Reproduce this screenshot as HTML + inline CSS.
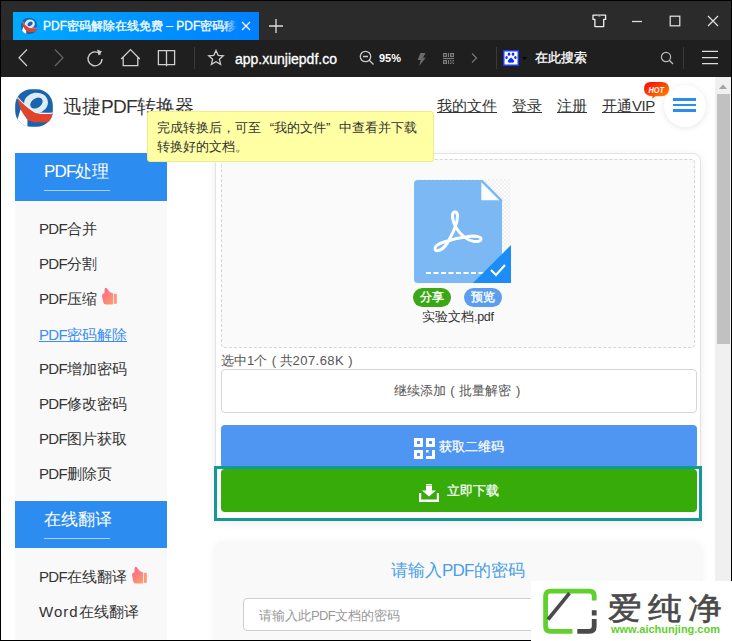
<!DOCTYPE html>
<html><head><meta charset="utf-8">
<style>
*{box-sizing:border-box;margin:0;padding:0}
html,body{width:732px;height:641px;overflow:hidden;background:#fff;font-family:"Liberation Sans",sans-serif}
.a{position:absolute}
#chrome{position:absolute;left:0;top:0;width:732px;height:77px;background:#1f1f1f}
#titlebar{position:absolute;left:0;top:0;width:732px;height:40px;background:#2b2b2b}
#tab{position:absolute;left:13px;top:12px;width:246px;height:28px;background:linear-gradient(90deg,#00aaff,#0094ff 50%,#007fff);overflow:hidden}
#tab .t{position:absolute;left:30px;top:6px;width:196px;overflow:hidden;font-size:12px;color:#fff;white-space:nowrap;line-height:16px;-webkit-text-stroke:0.3px #fff}
#tab .fade{position:absolute;left:212px;top:0;width:14px;height:28px;background:linear-gradient(90deg,rgba(0,132,255,0),#0084ff 90%)}
#page{position:absolute;left:1px;top:77px;width:714px;height:564px;background:#fff;overflow:hidden}
#scroll{position:absolute;left:715px;top:77px;width:16px;height:564px;background:#f0f0f0}
#rborder{position:absolute;left:731px;top:0;width:1px;height:641px;background:#000}
#lborder{position:absolute;left:0;top:0;width:1px;height:641px;background:#000}
#tborder{position:absolute;left:0;top:0;width:732px;height:1px;background:#000}
#bborder{position:absolute;left:0;top:640px;width:732px;height:1px;background:#000}
.link{text-decoration:underline;color:#333;font-size:15px;position:absolute;top:95px;line-height:20px;white-space:nowrap}
.side{position:absolute;left:14px;width:152px;background:#f9f9f9}
.shead{position:absolute;left:14px;width:152px;height:48px;background:#2d8cf0}
.shead>span{position:absolute;left:29px;top:7px;font-size:17px;color:#fff;line-height:24px;white-space:nowrap}
.shead i{position:absolute;left:29px;top:37px;width:66px;height:1px;background:rgba(255,255,255,.6)}
.lp{letter-spacing:-0.85px}
.lq{letter-spacing:-0.7px}
.item{position:absolute;left:38px;font-size:15px;color:#333;line-height:20px;white-space:nowrap}
.thumb{position:absolute}
.card{position:absolute;background:#fff;border:1px solid #e3e3e3;border-radius:8px;box-shadow:0 2px 8px rgba(0,0,0,.08)}
.btn{position:absolute;left:220px;width:476px;border-radius:4px;text-align:center;white-space:nowrap}
</style></head><body>
<div id="chrome">
  <div id="titlebar"></div>
  <div id="tab">
    <svg class="a" style="left:8px;top:6px" width="16" height="16" viewBox="0 0 40 40">
      <defs><clipPath id="lc2"><rect x="0.2" y="0.2" width="39.6" height="39.6" rx="17"/></clipPath></defs>
      <g clip-path="url(#lc2)">
      <rect x="0" y="0" width="40" height="40" fill="#1a64ad"/>
    <ellipse cx="22.1" cy="14.7" rx="12.6" ry="10.8" transform="rotate(-8 22.1 14.7)" fill="#dcedf9"/>
    <ellipse cx="22.6" cy="14.8" rx="7.2" ry="5.0" transform="rotate(-35 22.6 14.8)" fill="#1a64ad"/>
    <path d="M5.9 21.3L13.1 32.1V41H-1V36L2.6 32.1Z" fill="#fff"/>
    <path d="M2.2 8.6Q10 18 21.7 24.6Q28 26.5 41 25.4" fill="none" stroke="#eef7ff" stroke-width="1.6"/>
    <path d="M2.5 9.2Q10 18.5 21.7 25.4Q28 27 41 26L41 34Q30 35.5 20 34.9Q15.5 34 13.1 32.1Q8.5 26.5 5.9 21.3Q3.5 15.5 2.5 9.2Z" fill="#e2432b"/>
      </g>
    </svg>
    <div class="t">PDF密码解除在线免费 – PDF密码移除</div>
    <div class="fade"></div>
    <svg class="a" style="left:228px;top:9px" width="10" height="10" viewBox="0 0 10 10"><path d="M1 1L9 9M9 1L1 9" stroke="#fff" stroke-width="1.2"/></svg>
  </div>
  <svg class="a" style="left:269px;top:19px" width="14" height="14" viewBox="0 0 14 14"><path d="M7 0V14M0 7H14" stroke="#ddd" stroke-width="1.3"/></svg>
  <!-- window controls -->
  <svg class="a" style="left:592px;top:14px" width="15" height="14" viewBox="0 0 15 14"><path d="M1 1.2H13.6V5.4H11.7V12.6H2.9V5.4H1Z" fill="none" stroke="#f0f0f0" stroke-width="1.3" stroke-linejoin="round"/><path d="M5.6 1.5Q7.3 3.8 9 1.5" fill="none" stroke="#8a8a8a" stroke-width="1"/></svg>
  <svg class="a" style="left:631px;top:15px" width="12" height="12" viewBox="0 0 12 12"><path d="M1 6.5H11" stroke="#ddd" stroke-width="1.3"/></svg>
  <svg class="a" style="left:669px;top:15px" width="12" height="12" viewBox="0 0 12 12"><rect x="1.2" y="1.2" width="9.6" height="9.6" fill="none" stroke="#e6e6e6" stroke-width="1.2"/></svg>
  <svg class="a" style="left:707px;top:15px" width="12" height="12" viewBox="0 0 12 12"><path d="M1 1L11 11M11 1L1 11" stroke="#ddd" stroke-width="1.3"/></svg>
  <!-- toolbar -->
  <svg class="a" style="left:16px;top:49px" width="14" height="20" viewBox="0 0 14 20"><path d="M11 0.5L3 8.75L11 17" fill="none" stroke="#d0d0d0" stroke-width="1.2"/></svg>
  <svg class="a" style="left:52px;top:49px" width="14" height="20" viewBox="0 0 14 20"><path d="M3 0.5L11 8.75L3 17" fill="none" stroke="#666" stroke-width="1.2"/></svg>
  <svg class="a" style="left:85px;top:48px" width="20" height="20" viewBox="0 0 20 20"><path d="M15.5 6.5A7 7 0 1 0 17 11" fill="none" stroke="#ccc" stroke-width="1.4"/><path d="M12 1.5L17 3.5L13.5 7.5Z" fill="#ccc"/></svg>
  <svg class="a" style="left:120px;top:48px" width="21" height="20" viewBox="0 0 21 20"><path d="M1.2 11L10.5 1.6L19.8 11M3.2 9V17.6H17.8V9" fill="none" stroke="#d0d0d0" stroke-width="1.3"/></svg>
  <svg class="a" style="left:157px;top:49px" width="19" height="19" viewBox="0 0 19 19"><path d="M1.4 1.6H9.5V15.6H1.4ZM9.5 1.6H17.6V15.6H9.5V17.2" fill="none" stroke="#d0d0d0" stroke-width="1.3"/></svg>
  <div class="a" style="left:194px;top:47px;width:1px;height:22px;background:#3a3a3a"></div>
  <svg class="a" style="left:207px;top:49px" width="18" height="18" viewBox="0 0 18 18"><path d="M9 1.5L11.2 6.3L16.3 6.8L12.4 10.2L13.6 15.4L9 12.7L4.4 15.4L5.6 10.2L1.7 6.8L6.8 6.3Z" fill="none" stroke="#ccc" stroke-width="1.3"/></svg>
  <div class="a" style="left:235px;top:50px;font-size:14px;color:#fff;line-height:18px;-webkit-text-stroke:0.3px #fff">app.xunjiepdf.co</div>
  <svg class="a" style="left:359px;top:50px" width="16" height="16" viewBox="0 0 16 16"><circle cx="6.5" cy="6.5" r="5.2" fill="none" stroke="#ccc" stroke-width="1.3"/><path d="M4 6.5H9M10.3 10.3L14.5 14.5" stroke="#ccc" stroke-width="1.3"/></svg>
  <div class="a" style="left:379px;top:50px;font-size:11px;color:#fff;line-height:16px;font-weight:bold">95%</div>
  <svg class="a" style="left:417px;top:53px" width="9" height="13" viewBox="0 0 9 13"><path d="M3.5 0H8.5L6 4.8H8.8L2.2 13L3.6 7H0.6Z" fill="#6a6a6a"/></svg>
  <svg class="a" style="left:443px;top:53px" width="11" height="11" viewBox="0 0 11 11"><g fill="#7a7a7a"><path d="M0 0H4V4H0ZM1.2 1.2V2.8H2.8V1.2Z"/><path d="M7 0H11V4H7ZM8.2 1.2V2.8H9.8V1.2Z"/><path d="M0 7H4V11H0ZM1.2 8.2V9.8H2.8V8.2Z"/><rect x="4.9" y="0" width="1.2" height="4"/><rect x="4.9" y="7" width="1.2" height="4"/><rect x="0" y="4.9" width="11" height="1.2"/><rect x="7" y="7" width="1.3" height="1.3"/><rect x="9.7" y="7" width="1.3" height="1.3"/><rect x="8.35" y="8.35" width="1.3" height="1.3"/><rect x="7" y="9.7" width="1.3" height="1.3"/><rect x="9.7" y="9.7" width="1.3" height="1.3"/></g></svg>
  <svg class="a" style="left:471px;top:53px" width="7" height="10" viewBox="0 0 7 10"><path d="M1 0.5L5.5 5L1 9.5" fill="none" stroke="#777" stroke-width="1.2"/></svg>
  <div class="a" style="left:496px;top:47px;width:1px;height:22px;background:#3a3a3a"></div>
  <svg class="a" style="left:503px;top:50px" width="16" height="16" viewBox="0 0 16 16"><rect x="0.75" y="0.75" width="14.5" height="14.5" fill="#fff" stroke="#1a3cff" stroke-width="1.5"/><g fill="#0f2fff"><ellipse cx="6" cy="4.2" rx="1.3" ry="1.6"/><ellipse cx="10" cy="4.2" rx="1.3" ry="1.6"/><ellipse cx="3.6" cy="7.4" rx="1.2" ry="1.5"/><ellipse cx="12.4" cy="7.4" rx="1.2" ry="1.5"/><path d="M8 7.5Q10.5 9 11.3 11.3Q11 13.2 8 12.5Q5 13.2 4.7 11.3Q5.5 9 8 7.5Z"/></g></svg>
  <svg class="a" style="left:522px;top:57px" width="5" height="3" viewBox="0 0 5 3"><path d="M0 0H5L2.5 3Z" fill="#050505"/></svg>
  <div class="a" style="left:535px;top:48px;font-size:13px;color:#fff;line-height:20px;-webkit-text-stroke:0.3px #fff">在此搜索</div>
  <svg class="a" style="left:660px;top:51px" width="14" height="14" viewBox="0 0 14 14"><circle cx="6" cy="6" r="4.6" fill="none" stroke="#bbb" stroke-width="1.2"/><path d="M9.3 9.3L13 13" stroke="#bbb" stroke-width="1.3"/></svg>
  <div class="a" style="left:683px;top:47px;width:1px;height:22px;background:#3a3a3a"></div>
  <svg class="a" style="left:702px;top:50px" width="16" height="15" viewBox="0 0 16 15"><path d="M0 1.4H16M0 7.6H16M0 13.6H16" stroke="#ddd" stroke-width="1.2"/></svg>
</div>

<div id="page">
  <svg width="0" height="0" style="position:absolute"><defs><linearGradient id="tg" x1="0" y1="0" x2="0.8" y2="1"><stop offset="0" stop-color="#ff5e8e"/><stop offset="1" stop-color="#ff9a70"/></linearGradient></defs></svg>
  <!-- header -->
  <svg class="a" style="left:14px;top:12px" width="38" height="38" viewBox="0 0 40 40">
    <defs><clipPath id="lc"><rect x="0.2" y="0.2" width="39.6" height="39.6" rx="17"/></clipPath></defs>
    <g clip-path="url(#lc)">
    <rect x="0" y="0" width="40" height="40" fill="#1a64ad"/>
    <ellipse cx="22.1" cy="14.7" rx="12.6" ry="10.8" transform="rotate(-8 22.1 14.7)" fill="#dcedf9"/>
    <ellipse cx="22.6" cy="14.8" rx="7.2" ry="5.0" transform="rotate(-35 22.6 14.8)" fill="#1a64ad"/>
    <path d="M5.9 21.3L13.1 32.1V41H-1V36L2.6 32.1Z" fill="#fff"/>
    <path d="M2.2 8.6Q10 18 21.7 24.6Q28 26.5 41 25.4" fill="none" stroke="#eef7ff" stroke-width="1.6"/>
    <path d="M2.5 9.2Q10 18.5 21.7 25.4Q28 27 41 26L41 34Q30 35.5 20 34.9Q15.5 34 13.1 32.1Q8.5 26.5 5.9 21.3Q3.5 15.5 2.5 9.2Z" fill="#e2432b"/>
    </g>
  </svg>
  <div class="a" style="left:62px;top:17px;font-size:19px;color:#333;line-height:26px;white-space:nowrap">迅捷<span style="letter-spacing:-0.7px">PDF</span>转换器</div>

  <div class="link" style="left:436px;top:19px">我的文件</div>
  <div class="link" style="left:511px;top:19px">登录</div>
  <div class="link" style="left:556px;top:19px">注册</div>
  <div class="link" style="left:601px;top:19px">开通<span style="letter-spacing:-0.5px">VIP</span></div>
  
  <div class="a" style="left:663px;top:8px;width:42px;height:42px;border-radius:50%;background:#fff;box-shadow:0 1px 6px rgba(0,0,0,.1)"></div>
  <div class="a" style="left:672px;top:21px;width:23px;height:3px;background:#2d8cf0"></div>
  <div class="a" style="left:672px;top:27px;width:23px;height:2px;background:#2d8cf0"></div>
  <div class="a" style="left:672px;top:32px;width:23px;height:3px;background:#2d8cf0"></div>
  <svg class="a" style="left:642px;top:4px" width="27" height="19" viewBox="0 0 27 19">
    <defs><linearGradient id="hg" x1="0" y1="0" x2="0.9" y2="1"><stop offset="0.2" stop-color="#ff1a00"/><stop offset="1" stop-color="#ff9000"/></linearGradient></defs>
    <path d="M7.5 1H18.5Q26 1 26 8Q26 15.3 18.5 15.3H12.5L9.2 17.8L9.6 15.2Q1 15 1 8Q1 1 7.5 1Z" fill="url(#hg)"/>
    <text x="5.5" y="11.8" font-size="9.5" font-weight="bold" font-style="italic" fill="#fff" font-family="Liberation Sans" textLength="15.5" lengthAdjust="spacingAndGlyphs">HOT</text>
  </svg>

  <!-- sidebar -->
  <div class="side" style="top:76px;height:347px"></div>
  <div class="shead" style="top:76px"><span><span class="lp">PDF</span>处理</span><i></i></div>
  <div class="item" style="top:142px"><span class="lq">PDF</span>合并</div>
  <div class="item" style="top:177px"><span class="lq">PDF</span>分割</div>
  <div class="item" style="top:212px"><span class="lq">PDF</span>压缩<svg class="thumb" style="left:62px;top:-2px" width="16" height="18" viewBox="0 0 16 18"><path d="M4.7 0.7Q6 0.8 6.5 2.2Q8 5 11.5 6.2L12.2 6.5V16.8Q12 17.6 11 17.6H5Q2.5 17.6 2.2 15L1 9Q1 6.5 3.5 6.3L3.6 2.5Q3.8 0.7 4.7 0.7Z" fill="url(#tg)"/><rect x="13" y="6.7" width="2.8" height="10.2" rx="0.8" fill="#ff9677"/></svg></div>
  <div class="item" style="top:248px;color:#3a8ef2;text-decoration:underline"><span class="lq">PDF</span>密码解除</div>
  <div class="item" style="top:282px"><span class="lq">PDF</span>增加密码</div>
  <div class="item" style="top:317px"><span class="lq">PDF</span>修改密码</div>
  <div class="item" style="top:352px"><span class="lq">PDF</span>图片获取</div>
  <div class="item" style="top:387px"><span class="lq">PDF</span>删除页</div>
  <div class="shead" style="top:424px"><span>在线翻译</span><i></i></div>
  <div class="side" style="top:471px;height:100px"></div>
  <div class="item" style="top:490px"><span class="lq">PDF</span>在线翻译<svg class="thumb" style="left:92px;top:-1px" width="16" height="18" viewBox="0 0 16 18"><path d="M4.7 0.7Q6 0.8 6.5 2.2Q8 5 11.5 6.2L12.2 6.5V16.8Q12 17.6 11 17.6H5Q2.5 17.6 2.2 15L1 9Q1 6.5 3.5 6.3L3.6 2.5Q3.8 0.7 4.7 0.7Z" fill="url(#tg)"/><rect x="13" y="6.7" width="2.8" height="10.2" rx="0.8" fill="#ff9677"/></svg></div>
  <div class="item" style="top:525px"><span style="letter-spacing:1px">Word</span>在线翻译</div>

  <!-- main card -->
  <div class="card" style="left:214px;top:76px;width:486px;height:368px"></div>
  <div class="a" style="left:220px;top:82px;width:474px;height:189px;border:1px dashed #d6d6d6;border-radius:4px;background:#fafafa"></div>
  <!-- pdf icon -->
  <div class="a" style="left:413px;top:102px;width:97px;height:104px;background-color:#fbfbfb;background-image:linear-gradient(45deg,#f1f1f1 25%,transparent 25%,transparent 75%,#f1f1f1 75%),linear-gradient(45deg,#f1f1f1 25%,transparent 25%,transparent 75%,#f1f1f1 75%);background-size:4px 4px;background-position:0 0,2px 2px"></div>
  <svg class="a" style="left:413px;top:103px" width="97" height="103" viewBox="0 0 97 103">
    <path d="M4 0H67L88 21V99Q88 103 84 103H4Q0 103 0 99V4Q0 0 4 0Z" fill="#7cb9f4"/>
    <path d="M67.3 2V20.2H85.5Z" fill="#fbfdff"/>
    <path d="M67.5 0.5L88 21" stroke="#7cb9f4" stroke-width="2.4"/>
    <path d="M12 93H70" stroke="#fff" stroke-width="2" stroke-dasharray="5 2.5"/>
    <path d="M97 65V103H59Z" fill="#1c8cf7"/>
    <path d="M77 90L82 95L91 85" fill="none" stroke="#fff" stroke-width="2.2"/>
    <g fill="none" stroke="#fff" stroke-width="3" stroke-linecap="round">
      <path d="M41.5 47Q38.5 40 38.5 36Q38.5 32 41 32Q43.5 32 43.5 36Q43.5 45 35 60Q31 68 26 70Q21 72 21 68.5Q21 65 30 62Q44 57.5 58 56Q67 56 67 59Q67 62 60 61.5Q50 60 41.5 47Z"/>
    </g>
  </svg>
  <div class="a" style="left:412px;top:211px;width:38px;height:19px;border-radius:10px;background:#3aa815;color:#fff;font-size:12px;line-height:19px;text-align:center;-webkit-text-stroke:0.35px #fff">分享</div>
  <div class="a" style="left:463px;top:211px;width:38px;height:19px;border-radius:10px;background:#5b9ef0;color:#fff;font-size:12px;line-height:19px;text-align:center;-webkit-text-stroke:0.35px #fff">预览</div>
  <div class="a" style="left:421px;top:232px;font-size:12.5px;color:#333;line-height:17px;white-space:nowrap">实验文档<span style="letter-spacing:-0.3px">.pdf</span></div>
  <div class="a" style="left:220px;top:275px;font-size:13px;color:#555;line-height:18px;white-space:nowrap">选中1<span style="margin-left:0px">个</span><span style="margin:0 3.5px 0 4.5px">(</span>共<span style="letter-spacing:0.45px">207.68K</span><span style="margin-left:4px">)</span></div>
  <div class="btn" style="top:292px;height:44px;border:1px solid #d5d5d5;background:#fff;font-size:13px;color:#555;line-height:42px">继续添加<span style="display:inline-block;width:13px;text-align:center">(</span>批量解密<span style="display:inline-block;width:13px;padding-left:5px;text-align:left">)</span></div>
  <div class="btn" style="top:348px;height:43px;background:#4f96f2"></div>
  <svg class="a" style="left:413px;top:361px" width="21" height="21" viewBox="0 0 21 21"><g fill="#fff"><path d="M0 0H9V9H0ZM3 3V6H6V3Z"/><path d="M12 0H21V9H12ZM15 3V6H18V3Z"/><path d="M0 12H9V21H0ZM3 15V18H6V15Z"/><path d="M18 12H21V21H12V18H18Z"/><path d="M12 12H14.5V14.5H12Z"/></g></svg>
  <div class="a" style="left:438px;top:359px;font-size:13.2px;color:#fff;line-height:22px;white-space:nowrap;-webkit-text-stroke:0.25px #fff">获取二维码</div>
  <div class="a" style="left:213px;top:389px;width:488px;height:55px;border:3px solid #13999a"></div>
  <div class="btn" style="top:392px;height:43px;background:#37ab0a"></div>
  <svg class="a" style="left:418px;top:407px" width="20" height="18" viewBox="0 1 20 18"><g fill="#fff"><path d="M7 1H13V2.2H7ZM7 2.8H13V4H7Z"/><path d="M7 4H13V7.5H17L10 13.5L3 7.5H7Z"/><path d="M0 10H2.2V16.6H17.8V10H20V19H0Z"/></g></svg>
  <div class="a" style="left:446px;top:403px;font-size:13.2px;color:#fff;line-height:22px;white-space:nowrap;-webkit-text-stroke:0.25px #fff">立即下载</div>

  <!-- second card -->
  <div class="a" style="left:213px;top:465px;width:487px;height:140px;border-radius:8px;background:#f9f9f9;box-shadow:1px 1px 8px rgba(0,0,0,.06)"></div>
  <div class="a" style="left:390px;top:483px;font-size:17px;color:#4a9fe6;line-height:22px;white-space:nowrap">请输入<span style="letter-spacing:-0.8px">PDF</span>的密码</div>
  <div class="a" style="left:242px;top:521px;width:320px;height:33px;border:1px solid #cfcfcf;border-radius:4px;background:#fff"></div>
  <div class="a" style="left:258px;top:530px;font-size:13px;color:#999;line-height:17px;white-space:nowrap">请输入此<span style="letter-spacing:-0.6px">PDF</span>文档的密码</div>

  <!-- tooltip -->
  <div class="a" style="left:146px;top:34px;width:287px;height:51px;background:#ffffa3;border:1px solid #f0eb8c;border-radius:3px"></div>
  <div class="a" style="left:156px;top:41px;font-size:13px;color:#333;line-height:19px;white-space:nowrap">完成转换后，可至<span style="display:inline-block;width:13px;text-align:right">“</span>我的文件<span style="display:inline-block;width:13px;text-align:left">”</span>中查看并下载<br>转换好的文档。</div>
</div>

<div id="scroll">
  <svg class="a" style="left:4px;top:7px" width="8" height="5" viewBox="0 0 8 5"><path d="M0 5H8L4 0.5Z" fill="#a3a3a3"/></svg>
  <div class="a" style="left:2px;top:17px;width:13px;height:250px;background:#c1c1c1"></div>
</div>
<div id="lborder"></div><div id="tborder"></div>
<div id="rborder"></div>
<div id="bborder"></div>

<!-- watermark -->
<div class="a" style="left:531px;top:581px;width:201px;height:60px;background:#fff">
  <svg class="a" style="left:7px;top:3px" width="64" height="54" viewBox="0 0 64 54">
    <path d="M56.2 16.6V12Q56.2 7.2 51.4 7.2H12.4Q7.6 7.2 7.6 12V42.6Q7.6 47.4 12.4 47.4H34.5" fill="none" stroke="#5fd02c" stroke-width="4.8"/>
    <path d="M56.2 26.2V31.5" stroke="#4a4a4a" stroke-width="4.8"/>
    <path d="M56.2 35V42.6Q56.2 47.4 51.4 47.4H39.3" fill="none" stroke="#4a4a4a" stroke-width="4.8"/>
    <path d="M10 35.5L31.5 9.2" stroke="#4a4a4a" stroke-width="3.6"/>
  </svg>
  <div class="a" style="left:77px;top:7px;font-size:34px;color:#4a4a4a;line-height:38px;white-space:nowrap;letter-spacing:6px;-webkit-text-stroke:0.7px #4a4a4a;transform:scaleY(0.92);transform-origin:0 90%">爱纯净</div>
  <div class="a" style="left:80px;top:42px;font-size:11px;color:#5fd02c;line-height:12px;white-space:nowrap;font-weight:bold">www.aichunjing.com</div>
</div>
</body></html>
